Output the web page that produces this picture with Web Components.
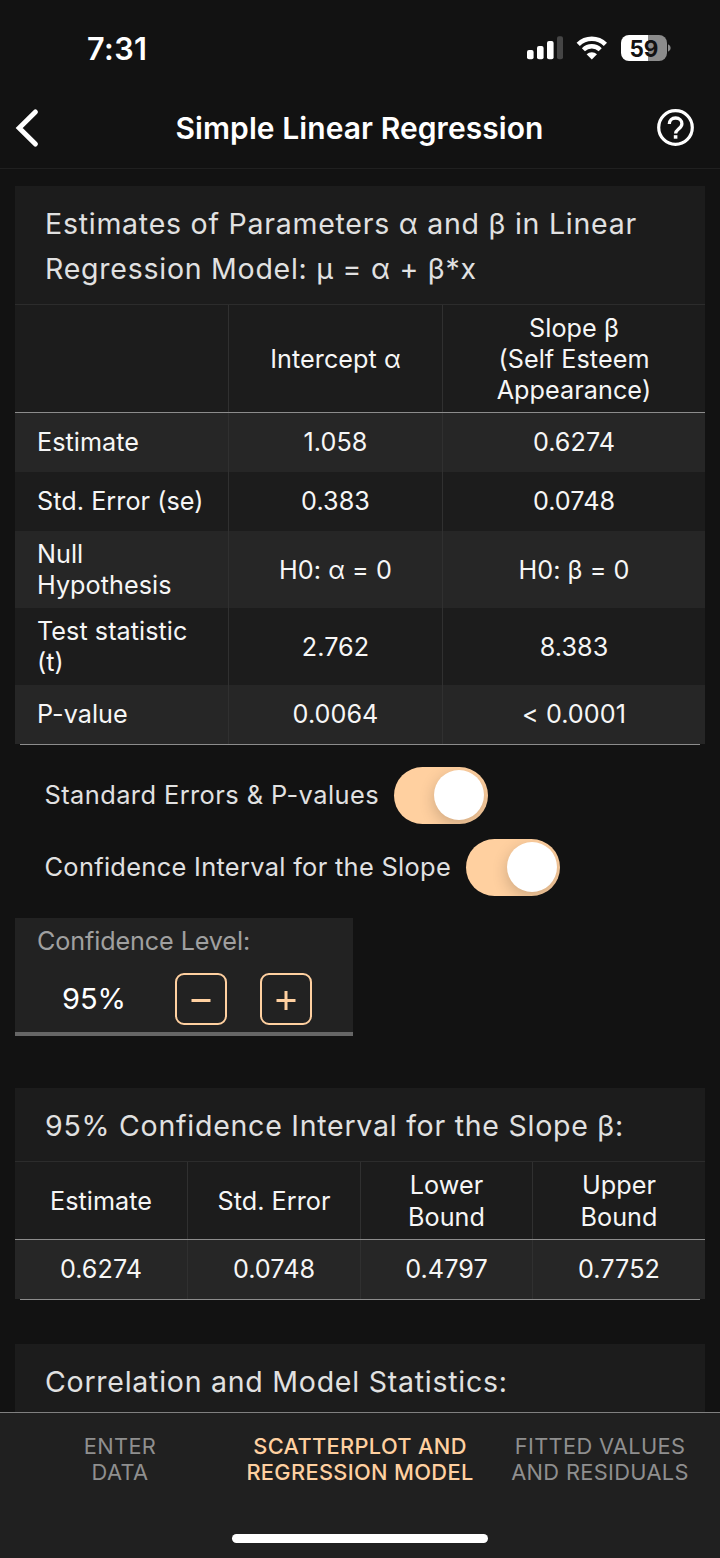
<!DOCTYPE html>
<html lang="en">
<head>
<meta charset="utf-8">
<title>Simple Linear Regression</title>
<style>
    html, body {
        margin: 0;
        height: 1558px;
        overflow: hidden;
        background: #121212;
    }

    body {
        font-family: Inter, "Liberation Sans", sans-serif;
        color: #fff;
    }
</style>
</head>
<body>

<template id="phone-screen-template">
    <style>
        :host {
            display: flex;
            flex-direction: column;
            width: 720px;
            height: 1558px;
            overflow: hidden;
            background: #121212;
        }

        main {
            flex: 1;
            min-height: 0;
            overflow: hidden;
            padding: 17px 15px 0;
            box-sizing: border-box;
        }
    </style>
    <slot name="top"></slot>
    <main><slot></slot></main>
    <slot name="bottom"></slot>
</template>

<template id="status-bar-template">
    <style>
        :host {
            display: flex;
            justify-content: space-between;
            align-items: center;
            height: 88px;
            padding: 8px 49px 0 87px;
            box-sizing: border-box;
        }

        .time {
            font-size: 30.6px;
            font-weight: 600;
            letter-spacing: 0.4px;
        }

        .icons {
            display: flex;
            align-items: center;
        }

        .battery {
            display: flex;
            align-items: center;
            justify-content: center;
            width: 46.5px;
            height: 26px;
            border-radius: 8px;
            background: linear-gradient(90deg, #fff 59%, #8c8c8c 59%);
            color: #121212;
            font-size: 22.5px;
            font-weight: 700;
            letter-spacing: -0.3px;
        }
    </style>
    <span class="time"><slot></slot></span>
    <div class="icons">
        <svg width="36" height="24" viewBox="0 0 36 24">
            <rect x="0" y="14" width="6.6" height="9.3" rx="2" fill="#fff"/>
            <rect x="10" y="10" width="6.6" height="13.3" rx="2" fill="#fff"/>
            <rect x="20" y="5" width="6.6" height="18.3" rx="2" fill="#fff"/>
            <rect x="30" y="0.3" width="6" height="23" rx="2" fill="#454545"/>
        </svg>
        <svg width="32" height="24" viewBox="0 0 32 24" style="margin: 0 13px 0 13px" fill="none" stroke="#fff">
            <path d="M2.2 8.3a19.4 19.4 0 0 1 27.2 0" stroke-width="4.6"/>
            <path d="M7.4 13.7a12 12 0 0 1 16.8 0" stroke-width="4.4"/>
            <path d="M10.6 18.2a7.6 7.6 0 0 1 10.4 0l-5.2 5.3z" fill="#fff" stroke="none"/>
        </svg>
        <span class="battery"><slot name="battery"></slot></span>
        <svg width="4" height="10" viewBox="0 0 4 10"><path d="M1 1.2q2.7 1 2.7 3.8T1 8.8z" fill="#8c8c8c"/></svg>
    </div>
</template>

<template id="nav-bar-template">
    <style>
        :host {
            display: flex;
            justify-content: space-between;
            align-items: center;
            height: 81px;
            padding: 0 25px 1px 15px;
            border-bottom: 1px solid #202020;
            box-sizing: border-box;
        }

        svg { display: block; }

        h1 {
            margin: 0;
            padding: 1px 0 0 24px;
            font-size: 30px;
            font-weight: 600;
            letter-spacing: 0.07px;
        }
    </style>
    <svg width="24" height="40" viewBox="0 0 24 40" fill="none" stroke="#fff" stroke-width="5" stroke-linecap="round" stroke-linejoin="miter">
        <path d="M20.4 4L4.2 20L20.4 36"/>
    </svg>
    <h1><slot></slot></h1>
    <svg width="39" height="39" viewBox="0 0 39 39" fill="none" stroke="#fff">
        <circle cx="19.5" cy="19.5" r="16.8" stroke-width="3.2"/>
        <path d="M13.3 16.1c0-3.6 2.6-6.1 6.3-6.1s6.3 2.4 6.3 5.7c0 4.9-6.3 5.6-6.3 9.8" stroke-width="3.3"/>
        <path d="M17.8 27.2h3.6v3.5h-3.6z" fill="#fff" stroke="none"/>
    </svg>
</template>

<template id="stats-card-template">
    <style>
        :host {
            display: block;
            background: #1c1c1c;
        }

        h2 {
            margin: 0;
            padding: 16px 30px 12.4px;
            font-size: 28.5px;
            line-height: 44.8px;
            font-weight: 400;
            letter-spacing: 0.75px;
            color: #e1e1e1;
            white-space: nowrap;
        }

        .rows {
            border-top: 1px solid #2c2c2c;
            position: relative;
        }

        :host([open]) .rows::after {
            content: "";
            position: absolute;
            left: 5px;
            right: 5px;
            bottom: -1px;
            height: 1px;
            background: #8c8c8c;
        }
    </style>
    <h2><slot name="heading"></slot></h2>
    <div class="rows"><slot></slot></div>
</template>

<template id="stats-row-template">
    <style>
        :host {
            display: grid;
            grid-template-columns: var(--columns);
            height: 59px;
            box-sizing: border-box;
        }

        :host([shade]) { background: #262626; }

        :host([tall]) {
            --cell-top: 2px;
            height: 77px;
        }

        :host([head]) {
            --cell-top: 2px;
            height: var(--head-height);
            border-bottom: 1px solid #8c8c8c;
        }
    </style>
    <slot></slot>
</template>

<template id="stats-cell-template">
    <style>
        :host {
            display: flex;
            align-items: center;
            justify-content: center;
            text-align: center;
            padding-top: var(--cell-top, 0);
            box-sizing: border-box;
            font-size: 25.2px;
            line-height: 31.2px;
            letter-spacing: 0.05px;
            color: #f6f6f6;
            border-left: 1px solid #303030;
            white-space: nowrap;
        }

        :host(:first-child) { border-left: none; }

        :host([label]) {
            justify-content: flex-start;
            text-align: left;
            padding-left: 22px;
        }
    </style>
    <div><slot></slot></div>
</template>

<template id="toggle-row-template">
    <style>
        :host {
            display: flex;
            align-items: center;
            height: 72px;
            padding-left: 29.5px;
            gap: 15px;
            font-size: 25.4px;
            letter-spacing: 0.4px;
            color: #e1e1e1;
            white-space: nowrap;
        }

        .track {
            display: flex;
            align-items: center;
            justify-content: flex-end;
            width: 94px;
            height: 57px;
            margin-top: 1px;
            padding-right: 3.5px;
            border-radius: 29px;
            box-sizing: border-box;
            overflow: hidden;
            background: #ffd0a0;
        }

        .knob {
            width: 50px;
            height: 50px;
            border-radius: 50%;
            background: #fff;
            box-shadow: 0 5px 16px rgba(0, 0, 0, 0.2);
        }
    </style>
    <span><slot></slot></span>
    <div class="track"><div class="knob"></div></div>
</template>

<template id="level-stepper-template">
    <style>
        :host {
            display: block;
            width: 337.5px;
            height: 118px;
            padding: 7px 0 0 22px;
            box-sizing: border-box;
            background: #222;
            border-bottom: 4px solid #666;
        }

        .label {
            font-size: 25.2px;
            line-height: 32px;
            letter-spacing: -0.12px;
            color: #a0a0a0;
        }

        .controls {
            display: flex;
            align-items: center;
            margin-top: 16px;
            height: 51px;
        }

        .value {
            width: 138px;
            padding-left: 25px;
            box-sizing: border-box;
            font-size: 29px;
            letter-spacing: 0;
        }

        button {
            display: flex;
            align-items: center;
            justify-content: center;
            width: 51.5px;
            height: 51.5px;
            margin: 1px 33.5px 0 0;
            padding: 0;
            border: 2px solid #ffd0a0;
            border-radius: 9px;
            background: none;
        }
    </style>
    <div class="label"><slot name="label"></slot></div>
    <div class="controls">
        <span class="value"><slot></slot></span>
        <button aria-label="Decrease">
            <svg width="20" height="20" viewBox="0 0 20 20"><path d="M.5 11.5h19" stroke="#ffd0a0" stroke-width="3"/></svg>
        </button>
        <button aria-label="Increase">
            <svg width="20" height="22" viewBox="0 0 20 22"><path d="M.5 12.5h19M10 3v19" stroke="#ffd0a0" stroke-width="3"/></svg>
        </button>
    </div>
</template>

<template id="tab-bar-template">
    <style>
        :host {
            display: flex;
            flex-direction: column;
            align-items: center;
            justify-content: space-between;
            height: 146px;
            padding: 20px 0 15px;
            box-sizing: border-box;
            background: #202020;
            border-top: 1px solid #808080;
        }

        .tabs {
            display: grid;
            grid-template-columns: repeat(3, 240px);
        }

        .home {
            width: 256.5px;
            height: 9.5px;
            border-radius: 5px;
            background: #fff;
        }
    </style>
    <div class="tabs"><slot></slot></div>
    <div class="home"></div>
</template>

<template id="tab-item-template">
    <style>
        :host {
            display: block;
            text-align: center;
            font-size: 21.8px;
            line-height: 26.2px;
            letter-spacing: 0.34px;
            color: #8f8f8f;
            white-space: nowrap;
        }

        :host([active]) {
            color: #ffd0a0;
            font-weight: 500;
        }
    </style>
    <slot></slot>
</template>

<phone-screen>
    <status-bar slot="top">7:31<span slot="battery">59</span></status-bar>
    <nav-bar slot="top">Simple Linear Regression</nav-bar>

    <stats-card open style="--columns: 213px 214px 263px; --head-height: 108px">
        <span slot="heading">Estimates of Parameters α and β in Linear<br>Regression Model: μ = α + β*x</span>
        <stats-row head>
            <stats-cell label></stats-cell>
            <stats-cell>Intercept α</stats-cell>
            <stats-cell>Slope β<br>(Self Esteem<br>Appearance)</stats-cell>
        </stats-row>
        <stats-row shade>
            <stats-cell label>Estimate</stats-cell>
            <stats-cell>1.058</stats-cell>
            <stats-cell>0.6274</stats-cell>
        </stats-row>
        <stats-row>
            <stats-cell label>Std. Error (se)</stats-cell>
            <stats-cell>0.383</stats-cell>
            <stats-cell>0.0748</stats-cell>
        </stats-row>
        <stats-row shade tall>
            <stats-cell label>Null<br>Hypothesis</stats-cell>
            <stats-cell>H0: α = 0</stats-cell>
            <stats-cell>H0: β = 0</stats-cell>
        </stats-row>
        <stats-row tall>
            <stats-cell label>Test statistic<br>(t)</stats-cell>
            <stats-cell>2.762</stats-cell>
            <stats-cell>8.383</stats-cell>
        </stats-row>
        <stats-row shade>
            <stats-cell label>P-value</stats-cell>
            <stats-cell>0.0064</stats-cell>
            <stats-cell>&lt; 0.0001</stats-cell>
        </stats-row>
    </stats-card>

    <toggle-row style="margin-top: 15px; letter-spacing: 0.43px">Standard Errors &amp; P-values</toggle-row>
    <toggle-row style="letter-spacing: 0.31px">Confidence Interval for the Slope</toggle-row>

    <level-stepper style="margin-top: 15px"><span slot="label">Confidence Level:</span>95%</level-stepper>

    <stats-card open style="--columns: 172px 173px 172px 173px; --head-height: 78px; margin-top: 52px">
        <span slot="heading">95% Confidence Interval for the Slope β:</span>
        <stats-row head>
            <stats-cell>Estimate</stats-cell>
            <stats-cell>Std. Error</stats-cell>
            <stats-cell>Lower<br>Bound</stats-cell>
            <stats-cell>Upper<br>Bound</stats-cell>
        </stats-row>
        <stats-row shade>
            <stats-cell>0.6274</stats-cell>
            <stats-cell>0.0748</stats-cell>
            <stats-cell>0.4797</stats-cell>
            <stats-cell>0.7752</stats-cell>
        </stats-row>
    </stats-card>

    <stats-card style="margin-top: 45px">
        <span slot="heading">Correlation and Model Statistics:</span>
    </stats-card>

    <tab-bar slot="bottom">
        <tab-item>ENTER<br>DATA</tab-item>
        <tab-item active>SCATTERPLOT AND<br>REGRESSION MODEL</tab-item>
        <tab-item>FITTED VALUES<br>AND RESIDUALS</tab-item>
    </tab-bar>
</phone-screen>

<script>
    // Base class: clones the template named after the element's tag
    class TemplateElement extends HTMLElement {
        constructor() {
            super();
            this.attachShadow({ mode: 'open' });
            const template = document.getElementById(this.localName + '-template');
            this.shadowRoot.appendChild(template.content.cloneNode(true));
        }
    }

    class PhoneScreen extends TemplateElement {}
    class StatusBar extends TemplateElement {}
    class NavBar extends TemplateElement {}
    class StatsCard extends TemplateElement {}
    class StatsRow extends TemplateElement {}
    class StatsCell extends TemplateElement {}
    class ToggleRow extends TemplateElement {}
    class LevelStepper extends TemplateElement {}
    class TabBar extends TemplateElement {}
    class TabItem extends TemplateElement {}

    customElements.define('phone-screen', PhoneScreen);
    customElements.define('status-bar', StatusBar);
    customElements.define('nav-bar', NavBar);
    customElements.define('stats-card', StatsCard);
    customElements.define('stats-row', StatsRow);
    customElements.define('stats-cell', StatsCell);
    customElements.define('toggle-row', ToggleRow);
    customElements.define('level-stepper', LevelStepper);
    customElements.define('tab-bar', TabBar);
    customElements.define('tab-item', TabItem);
</script>
</body>
</html>
